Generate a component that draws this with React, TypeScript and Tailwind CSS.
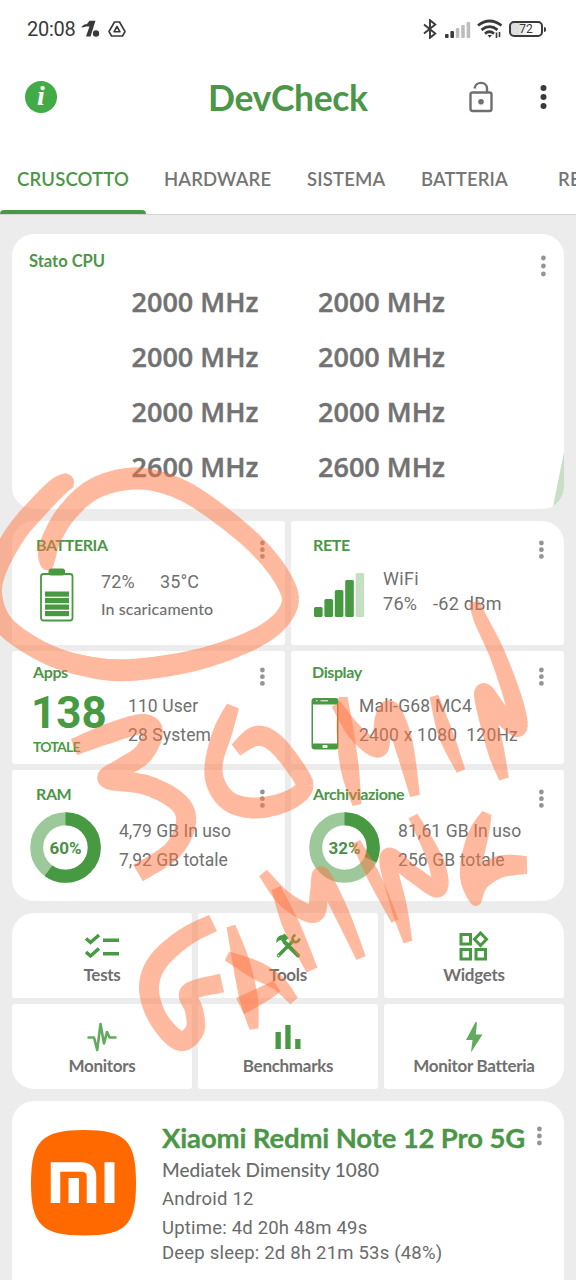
import React from 'react';

const lato = "font-['Lato',sans-serif]";
const roboto = "font-['Roboto',sans-serif]";

const Dots: React.FC<{ gap?: number; className?: string }> = ({ gap = 7, className = 'text-[#949494]' }) => (
  <svg width="6" height={gap * 2 + 6} className={`shrink-0 ${className}`} fill="currentColor">
    {[0, 1, 2].map((i) => (
      <circle key={i} cx="3.4" cy={3 + i * gap} r="2.4" />
    ))}
  </svg>
);

const StatusBar = () => (
  <div className={`h-[58px] flex items-center pl-[27px] pr-[30px] text-[#3a3a3a] ${roboto}`}>
    <span className="text-[20px] tracking-[-0.25px]">20:08</span>
    <svg width="20" height="18" viewBox="0 0 20 18" className="ml-[5px]" fill="currentColor">
      <path d="M0.5 7.5 C2 4.500 4 4.500 6 4 L8.500 0.800 H14.500 L9.500 16.500 H5 L8.500 6.500 H5 Q3 7.500 0.500 7.500 Z" />
      <circle cx="15" cy="13.500" r="3.200" />
    </svg>
    <svg width="18" height="16" viewBox="0 0 18 16" className="ml-[7px]" fill="none" stroke="currentColor" strokeWidth="1.6" strokeLinejoin="round">
      <path d="M6.500 1 H11.500 L17 10.500 L14.500 15 H3.500 L1 10.500 Z" />
      <path d="M9 5.500 L12 10.800 H6 Z" />
    </svg>
    <div className="flex-1" />
    <svg width="14" height="20" viewBox="0 0 14 20" className="mr-[7px]" fill="none" stroke="currentColor" strokeWidth="1.900">
      <path d="M1 5.500 L12.300 14.500 L7 18.800 V1.200 L12.300 5.500 L1 14.500" />
    </svg>
    <svg width="27" height="17" className="mr-[6px]">
      {[0, 1, 2, 3, 4].map((i) => (
        <rect key={i} x={1 + i * 5.4} y={13 - i * 3} width="3.6" height={4 + i * 3} rx="1" fill={i < 2 ? '#3a3a3a' : '#bdbdbd'} />
      ))}
    </svg>
    <svg width="26" height="20" viewBox="0 0 26 20" className="mr-[6px]" fill="none" stroke="currentColor" strokeWidth="2.800">
      <path d="M1 6.500 Q12.500 -2.500 24.500 6.500" />
      <path d="M4.500 10.800 Q12.500 4.500 20.500 10.800" />
      <path d="M8 14.600 Q12.500 11 17 14.600" />
      <path d="M10.500 16 L12.700 18.700 L15 16 Z" fill="currentColor" stroke="none" />
      <path d="M19.500 13.500 V19 M22.500 13 V18" strokeWidth="1.600" />
    </svg>
    <div className="flex items-center">
      <div className="w-[34px] h-[16px] border-2 border-[#3a3a3a] rounded-[5px] bg-[linear-gradient(90deg,#dedede_25%,#fff_60%)] text-[12px] leading-[13px] text-center">72</div>
      <div className="w-[2px] h-[5px] ml-px bg-[#3a3a3a] rounded-r" />
    </div>
  </div>
);

const Header = () => (
  <header className="h-[80px] flex items-center pl-[25px] pr-[29px] pb-[2px]">
    <div className="w-8 h-8 rounded-full bg-[#42ab48] text-white flex items-center justify-center">
      <span className="font-['Liberation_Serif',serif] font-bold italic text-[28px] leading-none pb-0.5">i</span>
    </div>
    <h1 className={`${lato} font-bold text-[35.500px] leading-none text-[#4c9648] tracking-[-0.35px] ml-[151px] pt-[2px] w-[200px] whitespace-nowrap`}>DevCheck</h1>
    <svg width="26" height="32" viewBox="0 0 26 32" className="ml-[60px]" fill="none" stroke="#6f6f6f" strokeWidth="2.400">
      <rect x="2.500" y="11.500" width="21" height="18.500" rx="2" />
      <path d="M6.500 7.500 C7.500 -0.500 19 0.500 19 7.500 V11.500" />
      <circle cx="13" cy="20.800" r="2.800" fill="#6f6f6f" stroke="none" />
    </svg>
    <div className="flex-1" />
    <svg width="7" height="26" fill="#3a3a3a">
      <circle cx="3.500" cy="4" r="3" />
      <circle cx="3.500" cy="13" r="3" />
      <circle cx="3.500" cy="22" r="3" />
    </svg>
  </header>
);

const Tabs = () => (
  <nav className={`h-[77px] flex ${lato} font-semibold text-[18.500px] tracking-[0.15px] text-[#757575] whitespace-nowrap overflow-hidden border-b border-[#d4d4d4]`}>
    <div className="w-[146px] shrink-0 flex flex-col items-center text-[#4c9648]">
      <span className="h-[72px] pt-7">CRUSCOTTO</span>
      <div className="h-1 w-full rounded-t bg-[#4c9648]" />
    </div>
    <span className="w-[143px] shrink-0 pt-7 pl-[18px]">HARDWARE</span>
    <span className="w-[114px] shrink-0 pt-7 pl-[18px]">SISTEMA</span>
    <span className="w-[137px] shrink-0 pt-7 pl-[18px]">BATTERIA</span>
    <span className="shrink-0 pt-7 pl-[18px]">RETE</span>
  </nav>
);

const CpuCard = () => {
  const freqs = [2000, 2000, 2000, 2000, 2000, 2000, 2600, 2600];
  return (
    <section className="relative h-[275px] bg-white rounded-[22px] overflow-hidden">
      <div className="h-[41px] flex justify-between pl-[17px] pr-[18px]">
        <h2 className={`${lato} font-bold text-[16.500px] leading-5 pt-[17px] text-[#4c9648]`}>Stato CPU</h2>
        <Dots gap={8} className="mt-[21px] text-[#949494]" />
      </div>
      <div className="grid grid-cols-[186.500px_186px] auto-rows-[55px] pl-[119.500px] font-['Open_Sans','Noto_Sans',sans-serif] font-semibold text-[27px] text-[#727272] [-webkit-text-stroke:0.45px_#727272]">
        {freqs.map((f, i) => (
          <span key={i} className="leading-[54px] whitespace-nowrap">{f} MHz</span>
        ))}
      </div>
      <svg className="absolute right-0 bottom-0" width="12" height="57">
        <path d="M12 0 L0.500 57 H12 Z" fill="#c8dfc6" />
      </svg>
    </section>
  );
};

const Cell: React.FC<{ title: string; className: string; titleClass: string; dotsClass?: string; children: React.ReactNode }> = ({
  title,
  className,
  titleClass,
  dotsClass = 'mt-[19px]',
  children,
}) => (
  <section className={`bg-white flex flex-col whitespace-nowrap text-[#707070] ${className}`}>
    <div className="h-[39px] shrink-0 flex justify-between pr-5">
      <h2 className={`${lato} font-bold text-[16px] leading-5 tracking-[-0.4px] text-[#4c9648] ${titleClass}`}>{title}</h2>
      <Dots gap={6.7} className={`text-[#949494] ${dotsClass}`} />
    </div>
    {children}
  </section>
);

const Donut: React.FC<{ percent: number }> = ({ percent }) => {
  const len = 2 * Math.PI * 28.8;
  return (
    <svg width="72" height="72" viewBox="0 0 72 72">
      <circle cx="35.5" cy="35.5" r="28.8" fill="none" stroke="#9dc99a" strokeWidth="13" />
      <circle
        cx="35.5" cy="35.5" r="28.8" fill="none" stroke="#479a42" strokeWidth="13"
        strokeDasharray={`${(len * percent) / 100} ${len}`} transform="rotate(-90 35.5 35.5)"
      />
      <text x="35.5" y="42" textAnchor="middle" fill="#4c8f48" className="font-['Roboto',sans-serif] font-bold text-[17px]">{percent}%</text>
    </svg>
  );
};

const StatusGrid = () => (
  <div className={`grid grid-cols-2 grid-rows-[124px_113px_131px] gap-1.5 ${roboto}`}>
    <Cell title="BATTERIA" className="rounded-[3px] rounded-tl-[22px]" titleClass="pt-[14px] pl-[24px]">
      <div className="flex pl-[28px] pt-2">
        <svg width="34" height="54" viewBox="0 0 34 54" fill="#479a42">
          <rect x="8.500" y="0.500" width="16.500" height="7" rx="2.500" />
          <rect x="1" y="6" width="31.500" height="46.500" rx="2.500" fill="none" stroke="#479a42" strokeWidth="1.800" />
          {[23.5, 30, 36.5, 43].map((y) => (
            <rect key={y} x="5" y={y} width="24" height="5.200" />
          ))}
        </svg>
        <div className="pl-[27px]">
          <div className="text-[18px] leading-[26px] pt-px tracking-[0.1px]"><span className="inline-block w-[59px]">72%</span>35°C</div>
          <div className={`${lato} font-medium text-[16px] leading-[28px] tracking-[0.1px]`}>In scaricamento</div>
        </div>
      </div>
    </Cell>
    <Cell title="RETE" className="rounded-[3px] rounded-tr-[22px]" titleClass="pt-[14px] pl-[22px]">
      <div className="flex pl-[23px] pt-1">
        <svg width="51" height="54" fill="#479a42" className="mt-[-1px]">
          {[10, 18, 27, 37, 44].map((h, i) => (
            <rect key={h} x={i * 10.4} y={54 - h} width="8.600" height={h} rx="1.500" fill={i === 4 ? '#c4dfc2' : '#479a42'} />
          ))}
        </svg>
        <div className="pl-[18px] pt-[2px] text-[18px] leading-[25px] tracking-[0.3px]">
          <div>WiFi</div>
          <div><span className="inline-block w-[50px]">76%</span>-62 dBm</div>
        </div>
      </div>
    </Cell>
    <Cell title="Apps" className="rounded-[3px]" titleClass="pt-[11px] pl-[21px]" dotsClass="mt-[16px]">
      <div className="flex pl-[19px]">
        <div className="w-[96px] text-[#479a42] font-bold">
          <div className="text-[44px] leading-[46px]">138</div>
          <div className={`${lato} text-[14px] leading-[22px] pl-[2px] tracking-[-0.8px]`}>TOTALE</div>
        </div>
        <div className="text-[17.500px] tracking-[0.1px] leading-[29px] pl-px pt-[2px]">
          <div>110 User</div>
          <div>28 System</div>
        </div>
      </div>
    </Cell>
    <Cell title="Display" className="rounded-[3px]" titleClass="pt-[11px] pl-[21px]" dotsClass="mt-[16px]">
      <div className="flex pl-[20px]">
        <svg width="28" height="52" viewBox="0 0 28 52" className="mt-2">
          <rect x="0.500" y="0" width="27" height="51.500" rx="3" fill="#479a42" />
          <rect x="2" y="6.500" width="24" height="39" fill="#fff" />
          <path d="M9.500 2.800 H17 M5 2.800 H6.500" stroke="#fff" strokeWidth="1" />
          <rect x="11.500" y="47" width="5" height="3" rx="1" fill="#fff" />
        </svg>
        <div className="text-[17.500px] tracking-[0.2px] leading-[29px] pl-[20px] pt-[2px]">
          <div>Mali-G68 MC4</div>
          <div className="whitespace-pre">2400 x 1080  120Hz</div>
        </div>
      </div>
    </Cell>
    <Cell title="RAM" className="rounded-[3px] rounded-bl-[22px]" titleClass="pt-[14px] pl-[24px]">
      <div className="flex pl-[18px] pt-[3px]">
        <Donut percent={60} />
        <div className="text-[17.500px] leading-[29px] pl-[17px] pt-[5px]">
          <div>4,79 GB In uso</div>
          <div>7,92 GB totale</div>
        </div>
      </div>
    </Cell>
    <Cell title="Archiviazione" className="rounded-[3px] rounded-br-[22px]" titleClass="pt-[14px] pl-[22px]">
      <div className="flex pl-[18px] pt-[3px]">
        <Donut percent={32} />
        <div className="text-[17.500px] tracking-[0.1px] leading-[29px] pl-[17px] pt-[5px]">
          <div>81,61 GB In uso</div>
          <div>256 GB totale</div>
        </div>
      </div>
    </Cell>
  </div>
);

const ToolsIcon = () => (
  <svg width="26" height="26" viewBox="0 0 26 26" fill="none" stroke="#479a42">
    <path d="M9.500 9 L23 22.500" strokeWidth="4" strokeLinecap="round" />
    <path d="M3.500 22.500 L18 8" strokeWidth="3.600" strokeLinecap="round" />
    <path d="M1.500 10 C0.500 5 4 2 8 2 L9.500 0.500 L13.500 5 L8.500 10 L6 7 Q3.500 7 1.500 10 Z" fill="#479a42" stroke="none" />
    <path d="M20.500 2 C17 3 16.500 8 19.500 9 C22 9.500 24 8 24.500 5.500" strokeWidth="2.600" />
    <circle cx="3.500" cy="22.500" r="0.800" fill="#fff" stroke="none" />
  </svg>
);

const shortcuts = [
  { label: 'Tests', round: 'rounded-tl-[22px]', icon: (
    <svg width="36" height="26" viewBox="0 0 36 26" fill="none" stroke="#479a42" strokeWidth="3.500">
      <path d="M2 5.500 L6.500 9.500 L15 2 M2 19 L6.500 23 L15 15.500 M19 7.200 H35 M19 20.700 H35" />
    </svg>
  ) },
  { label: 'Tools', round: '', icon: <ToolsIcon /> },
  { label: 'Widgets', round: 'rounded-tr-[22px]', icon: (
    <svg width="30" height="30" viewBox="0 0 30 30" fill="none" stroke="#479a42" strokeWidth="3">
      <rect x="2" y="3.500" width="9.500" height="9.500" />
      <rect x="2" y="18.500" width="9.500" height="9.500" />
      <rect x="17" y="18.500" width="9.500" height="9.500" />
      <path d="M21.500 2 L27.500 8.300 L21.500 14.500 L15.500 8.300 Z" />
    </svg>
  ) },
  { label: 'Monitors', round: 'rounded-bl-[22px]', icon: (
    <svg width="30" height="30" viewBox="0 0 30 30" fill="none" stroke="#62aa5d" strokeWidth="2.600" strokeLinejoin="round">
      <path d="M0.500 15.500 H7 L10.200 28 L13.500 2 L17 21.500 L20 10 L22.500 15.500 H29.500" />
    </svg>
  ) },
  { label: 'Benchmarks', round: '', icon: (
    <svg width="26" height="24" viewBox="0 0 26 24" fill="#479a42">
      <rect x="0.500" y="7" width="5.300" height="17" />
      <rect x="10.300" y="0" width="5.300" height="24" />
      <rect x="20.200" y="14" width="5.300" height="10" />
    </svg>
  ) },
  { label: 'Monitor Batteria', round: 'rounded-br-[22px]', icon: (
    <svg width="18" height="31" viewBox="0 0 18 31" fill="#62aa5d">
      <path d="M10.500 0 L1 18 H7.500 L6 30.500 L17.500 12.500 H10.800 L12 0.500 Z" />
    </svg>
  ) },
];

const ShortcutGrid = () => (
  <div className="grid grid-cols-3 auto-rows-[85px] gap-1.5">
    {shortcuts.map((s) => (
      <div key={s.label} className={`bg-white rounded-[3px] flex flex-col items-center pt-[17px] ${s.round}`}>
        <div className="h-8 flex items-center">{s.icon}</div>
        <span className={`${lato} font-bold text-[17px] leading-[26px] tracking-[-0.3px] text-[#707070]`}>{s.label}</span>
      </div>
    ))}
  </div>
);

const DeviceCard = () => (
  <section className="h-[190px] shrink-0 bg-white rounded-t-[22px] flex pl-[18px] pr-[22px] pt-[18px] text-[#6b6b6b] whitespace-nowrap">
    <svg width="108" height="108" viewBox="0 0 108 108" className="mt-[10px] shrink-0">
      <path d="M54 1 C96 1 106 12 106 54 C106 96 96 106.500 54 106.500 C12 106.500 1 96 1 54 C1 12 12 1 54 1 Z" fill="#ff6900" />
      <path d="M25.500 74 V38 H51 Q61.500 38 61.500 48 V74" fill="none" stroke="#fff" strokeWidth="9.500" />
      <rect x="38.500" y="49" width="10.500" height="25" fill="#fff" />
      <rect x="74.500" y="33.200" width="10" height="40.800" fill="#fff" />
    </svg>
    <div className="pl-[24px] w-[398px] shrink-0">
      <h2 className={`${lato} font-bold text-[27.500px] leading-[38px] text-[#4c9648] tracking-[-0.15px] [-webkit-text-stroke:0.3px_#4c9648]`}>Xiaomi Redmi Note 12 Pro 5G</h2>
      <div className={`${lato} font-medium text-[19px] leading-[26px]`}>Mediatek Dimensity 1080</div>
      <div className={`${roboto} text-[18.500px] tracking-[0.2px] leading-[33px]`}>Android 12</div>
      <div className={`${roboto} text-[18.500px] tracking-[0.2px] leading-[25px]`}>Uptime: 4d 20h 48m 49s</div>
      <div className={`${roboto} text-[18.500px] tracking-[0.2px] leading-[25px]`}>Deep sleep: 2d 8h 21m 53s (48%)</div>
    </div>
    <Dots className="mt-[7px] text-[#949494]" />
  </section>
);

// [x, y, pen width]
type Pt = [number, number, number];

const strokes: Pt[][] = [
  [[70, 480, 16], [58, 487, 20], [40, 505, 21], [16, 533, 21], [-4, 570, 21], [-8, 598, 21], [6, 627, 20], [45, 653, 20], [85, 666, 21], [130, 670, 22], [200, 659, 21], [262, 635, 19], [289, 607, 17], [283, 579, 18], [252, 541, 19], [198, 499, 20], [160, 482, 21], [127, 479, 22], [92, 490, 21], [66, 514, 20], [51, 540, 19], [47, 556, 18], [48, 569, 9]],
  [[74, 747, 17], [110, 733, 20], [142, 724, 20], [153, 732, 20], [143, 754, 20], [122, 768, 20], [108, 779, 20], [146, 785, 20], [178, 802, 20], [186, 823, 20], [172, 851, 19], [138, 873, 19]],
  [[233, 706, 13], [223, 731, 19], [214, 762, 18], [216, 784, 19], [230, 802, 20], [255, 808, 21], [285, 802, 20], [304, 788, 18], [297, 770, 18], [275, 743, 19], [256, 736, 20], [236, 750, 14]],
  [[343, 697, 9], [345, 730, 17], [350, 770, 18], [357, 805, 9]],
  [[336, 704, 10], [356, 733, 16], [379, 749, 17], [383, 720, 17], [391, 710, 18], [403, 742, 19], [415, 796, 10]],
  [[434, 696, 9], [446, 735, 15], [461, 771, 9]],
  [[504, 779, 10], [495, 747, 17], [483, 693, 18], [500, 713, 18], [518, 728, 18], [514, 702, 18], [498, 656, 16], [481, 620, 14], [474, 602, 10]],
  [[213, 923, 18], [184, 938, 19], [157, 963, 20], [149, 990, 20], [159, 1020, 19], [180, 1041, 20], [195, 1030, 19], [194, 1010, 18], [189, 992, 18], [222, 983, 19]],
  [[231, 926, 9], [241, 962, 17], [249, 1000, 18], [254, 1029, 9]],
  [[227, 956, 10], [256, 970, 18], [278, 983, 15], [294, 1001, 10]],
  [[240, 1006, 18], [262, 995, 16], [277, 986, 13]],
  [[263, 873, 10], [286, 900, 16], [314, 914, 18], [319, 892, 18], [322, 875, 16], [342, 914, 15], [361, 958, 10]],
  [[276, 888, 10], [292, 927, 17], [312, 970, 12]],
  [[356, 842, 9], [374, 877, 13], [395, 921, 8]],
  [[408, 942, 9], [399, 907, 16], [388, 857, 17], [413, 874, 16], [438, 889, 17], [436, 862, 16], [413, 816, 10]],
  [[487, 813, 10], [479, 833, 20], [472, 860, 22], [471, 882, 20], [476, 901, 10], [480, 882, 18], [499, 867, 22], [527, 865, 18]],
];

// Catmull-Rom through the pen positions, width interpolated along
const smooth = (pts: Pt[], steps = 8): Pt[] => {
  const out: Pt[] = [];
  for (let i = 0; i < pts.length - 1; i++) {
    const [a, b, c, d] = [pts[i - 1] || pts[i], pts[i], pts[i + 1], pts[i + 2] || pts[i + 1]];
    for (let s = 0; s < steps; s++) {
      const t = s / steps;
      out.push([0, 1, 2].map((k) =>
        0.5 * (2 * b[k] + (c[k] - a[k]) * t + (2 * a[k] - 5 * b[k] + 4 * c[k] - d[k]) * t * t + (3 * b[k] - a[k] - 3 * c[k] + d[k]) * t * t * t)
      ) as Pt);
    }
  }
  out.push(pts[pts.length - 1]);
  return out;
};

// One quad per segment plus a round joint, all wound the same way
const markerPath = (stroke: Pt[]) => {
  const pts = smooth(stroke);
  let d = '';
  for (let i = 1; i < pts.length; i++) {
    const [x1, y1, w1] = pts[i - 1];
    const [x2, y2, w2] = pts[i];
    const l = Math.hypot(x2 - x1, y2 - y1) || 1;
    const nx = -(y2 - y1) / l / 2;
    const ny = (x2 - x1) / l / 2;
    d += `M${x1 + nx * w1} ${y1 + ny * w1}L${x2 + nx * w2} ${y2 + ny * w2}L${x2 - nx * w2} ${y2 - ny * w2}L${x1 - nx * w1} ${y1 - ny * w1}Z`;
    if (i > 3 && i < pts.length - 4) {
      const r = w2 / 2;
      d += `M${x2 - r} ${y2}a${r} ${r} 0 1 0 ${2 * r} 0a${r} ${r} 0 1 0 ${-2 * r} 0Z`;
    }
  }
  return d;
};

const MarkerLayer = () => (
  <svg className="absolute inset-0 pointer-events-none" width="576" height="1280" viewBox="0 0 576 1280" fill="#ff7340">
    {strokes.map((stroke, n) => (
      <path key={n} d={markerPath(stroke)} fillOpacity="0.5" />
    ))}
  </svg>
);

const App: React.FC = () => (
  <div className="relative w-[576px] h-[1280px] overflow-hidden bg-[#ececec] flex flex-col">
    <div className="bg-white shrink-0">
      <StatusBar />
      <Header />
      <Tabs />
    </div>
    <main className="px-3 pt-[19px] flex flex-col gap-3">
      <CpuCard />
      <StatusGrid />
      <ShortcutGrid />
      <DeviceCard />
    </main>
    <MarkerLayer />
  </div>
);

export default App;
